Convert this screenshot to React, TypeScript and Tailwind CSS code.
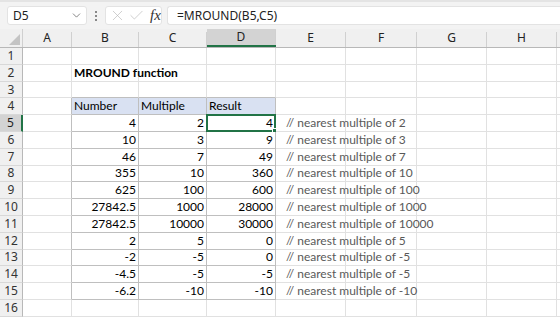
import React from "react"
import { ChevronDown, X, Check } from "lucide-react"

const cols = [
  { key: "A", w: "w-[49px]" },
  { key: "B", w: "w-[67px]" },
  { key: "C", w: "w-[68px]" },
  { key: "D", w: "w-[69px]" },
  { key: "E", w: "w-[70px]" },
  { key: "F", w: "w-[71px]" },
  { key: "G", w: "w-[70px]" },
  { key: "H", w: "w-[70px]" },
  { key: "I", w: "w-[70px]" },
]

const data: [string, string, string, string][] = [
  ["4", "2", "4", "// nearest multiple of 2"],
  ["10", "3", "9", "// nearest multiple of 3"],
  ["46", "7", "49", "// nearest multiple of 7"],
  ["355", "10", "360", "// nearest multiple of 10"],
  ["625", "100", "600", "// nearest multiple of 100"],
  ["27842.5", "1000", "28000", "// nearest multiple of 1000"],
  ["27842.5", "10000", "30000", "// nearest multiple of 10000"],
  ["2", "5", "0", "// nearest multiple of 5"],
  ["-2", "-5", "0", "// nearest multiple of -5"],
  ["-4.5", "-5", "-5", "// nearest multiple of -5"],
  ["-6.2", "-10", "-10", "// nearest multiple of -10"],
]

const font = { fontFamily: "Lato, 'Liberation Sans', sans-serif" }

function Cell({ row, ci }: { row: number; ci: number }) {
  const inTable = row >= 4 && row <= 15 && ci >= 1 && ci <= 3
  const leftOfTable = row >= 4 && row <= 15 && ci === 0
  const aboveTable = row === 3 && ci >= 1 && ci <= 3
  const isHead = row === 4 && inTable
  const active = row === 5 && ci === 3

  let border = "border-r border-b border-r-[#e1e1e1] border-b-[#e1e1e1]"
  if (inTable) border = "border-r border-b border-r-[#bfbfbf] border-b-[#bfbfbf]"
  else if (leftOfTable) border = "border-r border-b border-r-[#bfbfbf] border-b-[#e1e1e1]"
  else if (aboveTable) border = "border-r border-b border-r-[#e1e1e1] border-b-[#bfbfbf]"

  let content: React.ReactNode = null
  let align = "justify-end pr-[2px]"
  let extra = ""
  if (row === 2 && ci === 1) {
    content = <span className="font-bold whitespace-nowrap">MROUND function</span>
    align = "justify-start pl-[2px]"
    extra = "overflow-visible"
  } else if (isHead) {
    content = ["Number", "Multiple", "Result"][ci - 1]
    align = "justify-start pl-[2px]"
  } else if (inTable) {
    content = data[row - 5][ci - 1]
  } else if (row >= 5 && row <= 15 && ci === 4) {
    content = <span className="whitespace-nowrap text-[#595959]">{data[row - 5][3]}</span>
    align = "justify-start pl-[10px]"
    extra = "overflow-visible"
  }

  return (
    <div
      className={`relative shrink-0 h-full flex items-center ${cols[ci].w} ${border} ${align} ${extra} ${isHead ? "bg-[#d9e1f2]" : "bg-white"} ${ci === 1 && row === 2 ? "z-10" : ""} ${ci === 4 ? "z-10" : ""}`}
    >
      {content}
      {active && (
        <div className="absolute -left-[1px] -top-[1px] -right-[1px] -bottom-[1px] border-2 border-[#217346]">
          <div className="absolute -right-[4px] -bottom-[4px] w-[6px] h-[6px] bg-[#217346] border border-white" />
        </div>
      )}
    </div>
  )
}

export default function App() {
  const rows = Array.from({ length: 16 }, (_, i) => i + 1)
  return (
    <div className="w-[560px] h-[320px] overflow-hidden bg-white text-[12px] text-black" style={font}>
      {/* formula bar */}
      <div className="h-[29px] bg-[#f3f3f3] border-t-2 border-t-[#e4e4e4] flex items-start pt-[4px]">
        <div className="ml-[7px] w-[80px] h-[19px] bg-white rounded-[3px] border border-[#e3e3e3] flex items-center justify-between pl-[5px] pr-[3px]">
          <span className="text-[12px] text-[#222]" style={{ fontFamily: "'Noto Sans', sans-serif" }}>D5</span>
          <ChevronDown size={13} strokeWidth={1.3} className="text-[#555]" />
        </div>
        <div className="w-[18px] h-[19px] flex flex-col items-center justify-center gap-[2px]">
          <div className="w-[2px] h-[2px] bg-[#888]" />
          <div className="w-[2px] h-[2px] bg-[#888]" />
          <div className="w-[2px] h-[2px] bg-[#888]" />
        </div>
        <div className="w-[57px] h-[19px] bg-white rounded-[3px] border border-[#e3e3e3] flex items-center pl-[3px] gap-[2px]">
          <X size={17} strokeWidth={0.9} className="text-[#b5b5b5]" />
          <Check size={17} strokeWidth={0.9} className="text-[#b5b5b5]" />
          <span className="ml-[3px] text-[15px] italic text-[#333]" style={{ fontFamily: "'Liberation Serif', serif" }}>fx</span>
        </div>
        <div className="ml-[5px] flex-1 h-[19px] bg-white border border-[#e3e3e3] border-r-0 rounded-l-[3px] flex items-center pl-[9px]">
          <span className="text-[12px] text-[#222]" style={{ fontFamily: "'Noto Sans', sans-serif" }}>=MROUND(B5,C5)</span>
        </div>
      </div>

      {/* column headers */}
      <div className="flex h-[19px] bg-[#f0f0f0] border-b border-b-[#b8b8b8]" style={{ fontFamily: "'Noto Sans', sans-serif" }}>
        <div className="shrink-0 w-[23px] h-full flex items-end justify-end pr-[2px] pb-[2px] border-r border-r-[#d0d0d0]">
          <svg width="11" height="11" viewBox="0 0 11 11">
            <polygon points="11,0 11,11 0,11" fill="#c4c4c4" />
          </svg>
        </div>
        {cols.map((c) => (
          <div
            key={c.key}
            className={`shrink-0 h-full flex items-end ${c.w} ${c.key === "D" ? "bg-[#d3d3d3] border-b-2 border-b-[#217346]" : ""}`}
          >
            <div className="flex-1 h-full flex items-center justify-center text-[12px] text-[#222]">{c.key === "I" ? "" : c.key}</div>
            <div className="w-px h-[15px] bg-[#d0d0d0]" />
          </div>
        ))}
      </div>

      {/* grid */}
      {rows.map((r) => (
        <div key={r} className="flex h-[16.8px]">
          <div
            className={`shrink-0 w-[23px] h-full flex items-center justify-center text-[12px] border-b border-b-[#d8d8d8] ${
              r === 5
                ? "bg-[#d3d3d3] border-r-2 border-r-[#217346] text-[#222]"
                : "bg-[#f0f0f0] border-r border-r-[#b8b8b8] text-[#333]"
            }`}
            style={{ fontFamily: "'Noto Sans', sans-serif" }}
          >
            {r}
          </div>
          {cols.map((c, ci) => (
            <Cell key={c.key} row={r} ci={ci} />
          ))}
        </div>
      ))}
    </div>
  )
}
